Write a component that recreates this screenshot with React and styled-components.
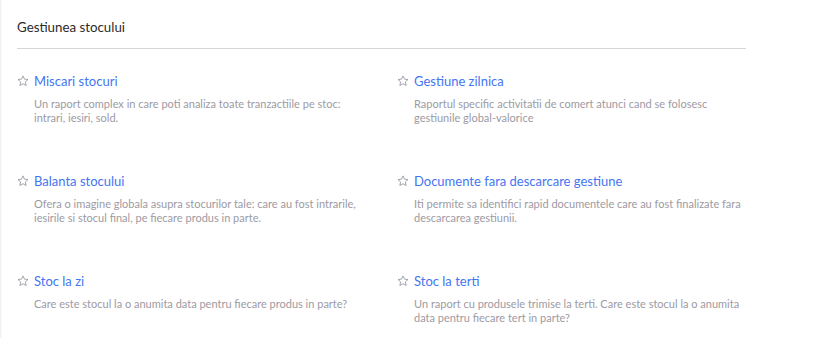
import styled, { createGlobalStyle } from 'styled-components';

const GlobalStyle = createGlobalStyle`
  body {
    margin: 0;
    background: #fff;
    font-family: Lato, "Open Sans", sans-serif;
  }
`;

const Panel = styled.section`
  height: 338px;
  overflow: hidden;
  padding-left: 17px;
  box-shadow: inset 2px 0 2px -1px #ececec;
`;

const Header = styled.h2`
  width: 729px;
  margin: 0;
  padding: 18px 0 12px;
  font-size: 13.3px;
  line-height: 18px;
  font-weight: 400;
  color: #2b2b2b;
  border-bottom: 1px solid #d6d6d6;
`;

const Grid = styled.div`
  display: grid;
  grid-template-columns: 380px 380px;
  grid-auto-rows: 100px;
  padding-top: 23px;
`;

const Item = styled.div`
  display: flex;
  flex-direction: column;
`;

const TitleRow = styled.div`
  display: flex;
  align-items: center;
  gap: 5px;
`;

const Link = styled.a`
  font-size: 13px;
  line-height: 18px;
  color: #4475f2;
  text-decoration: none;
  cursor: pointer;
`;

const Desc = styled.p`
  margin: 7px 0 0 17px;
  width: 330px;
  font-size: 11px;
  line-height: 14px;
  color: #9d9aa3;
`;

const Star = () => (
  <svg width="12" height="12" viewBox="0 0 24 24" fill="none" stroke="#8f8f99" strokeWidth="1.6" strokeLinejoin="round">
    <path d="M12 1.8l3 6.5 7 .8-5.2 4.8 1.5 7.1L12 17.4l-6.3 3.6 1.5-7.1L2 9.1l7-.8z" />
  </svg>
);

const items = [
  { title: 'Miscari stocuri', desc: 'Un raport complex in care poti analiza toate tranzactiile pe stoc: intrari, iesiri, sold.' },
  { title: 'Gestiune zilnica', desc: 'Raportul specific activitatii de comert atunci cand se folosesc gestiunile global-valorice' },
  { title: 'Balanta stocului', desc: 'Ofera o imagine globala asupra stocurilor tale: care au fost intrarile, iesirile si stocul final, pe fiecare produs in parte.' },
  { title: 'Documente fara descarcare gestiune', desc: 'Iti permite sa identifici rapid documentele care au fost finalizate fara descarcarea gestiunii.' },
  { title: 'Stoc la zi', desc: 'Care este stocul la o anumita data pentru fiecare produs in parte?' },
  { title: 'Stoc la terti', desc: 'Un raport cu produsele trimise la terti. Care este stocul la o anumita data pentru fiecare tert in parte?' },
];

export default function App() {
  return (
    <>
      <GlobalStyle />
      <Panel>
        <Header>Gestiunea stocului</Header>
        <Grid>
          {items.map(item => (
            <Item key={item.title}>
              <TitleRow>
                <Star />
                <Link>{item.title}</Link>
              </TitleRow>
              <Desc>{item.desc}</Desc>
            </Item>
          ))}
        </Grid>
      </Panel>
    </>
  );
}
